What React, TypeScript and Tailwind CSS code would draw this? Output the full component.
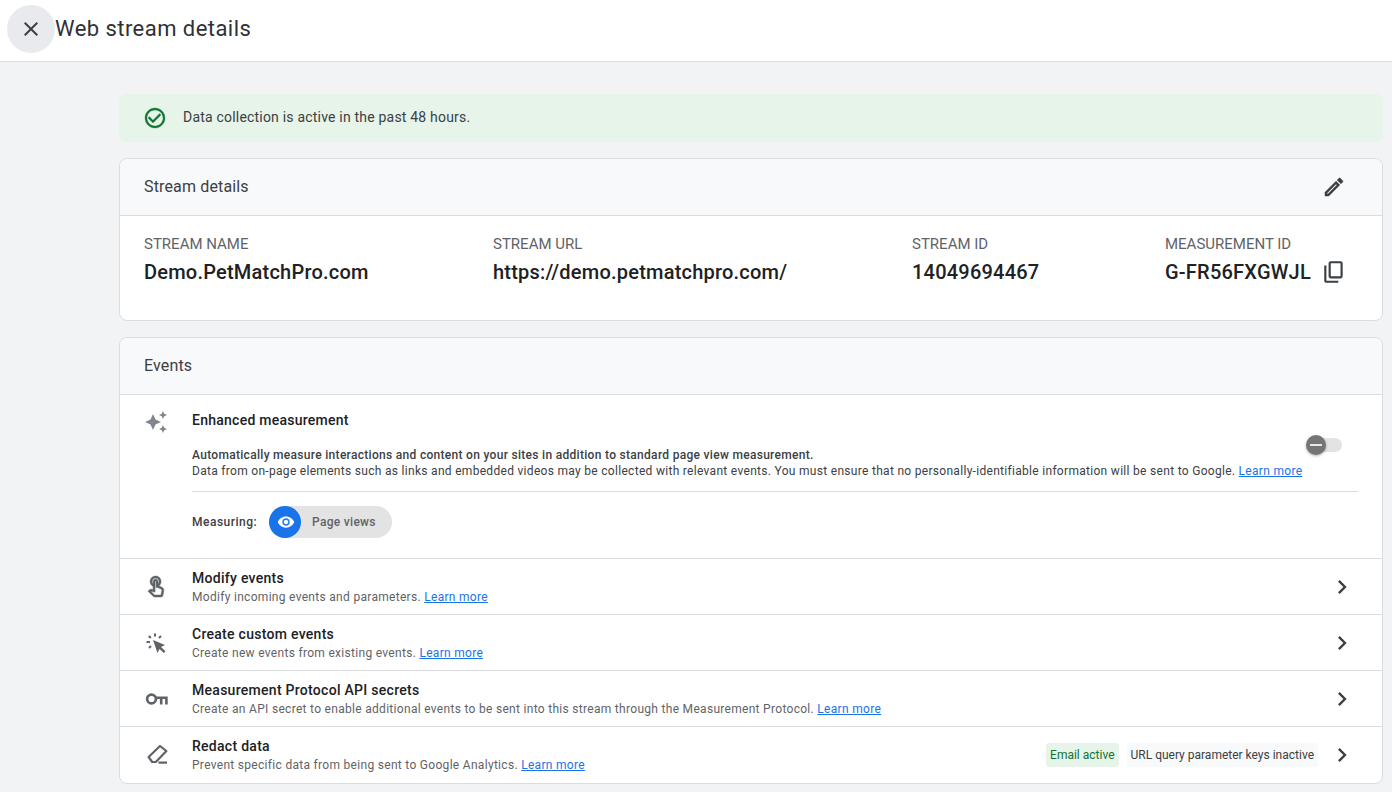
import React from "react";

const Icon = ({
  d,
  size = 24,
  className = "",
  bold = 0,
}: {
  d: string;
  size?: number;
  className?: string;
  bold?: number;
}) => (
  <svg
    width={size}
    height={size}
    viewBox="0 0 24 24"
    fill="currentColor"
    stroke={bold ? "currentColor" : "none"}
    strokeWidth={bold}
    className={`shrink-0 ${className}`}
  >
    <path d={d} />
  </svg>
);

const CHEVRON = "M8.59 16.59L13.17 12 8.59 7.41 10 6l6 6-6 6z";
const TOUCH =
  "M18.19 12.44l-3.24-1.62c1.29-1 2.12-2.56 2.12-4.32 0-3.03-2.47-5.5-5.5-5.5s-5.5 2.47-5.5 5.5c0 2.13 1.22 3.98 3 4.89v3.26c-2.15-.46-2.02-.44-2.26-.44-.53 0-1.03.21-1.41.59L4 16.22l5.09 5.09C9.52 21.75 10.12 22 10.74 22h6.3c.98 0 1.81-.7 1.97-1.67l.8-4.71c.22-1.3-.43-2.58-1.62-3.18zm-.35 2.85l-.8 4.71h-6.3c-.09 0-.17-.04-.24-.1l-3.68-3.68 4.25.89V6.5c0-.28.22-.5.5-.5s.5.22.5.5v6h1.76l3.46 1.73c.4.2.62.63.55 1.06zM8.07 6.5c0-1.93 1.57-3.5 3.5-3.5s3.5 1.57 3.5 3.5c0 .95-.38 1.81-1 2.44V6.5c0-1.38-1.12-2.5-2.5-2.5s-2.5 1.12-2.5 2.5v2.44c-.62-.63-1-1.49-1-2.44z";
const SPARK =
  "M19 9l1.25-2.75L23 5l-2.75-1.25L19 1l-1.25 2.75L15 5l2.75 1.25L19 9zm-7.5.5L9 4 6.5 9.5 1 12l5.5 2.5L9 20l2.5-5.5L17 12l-5.5-2.5zM19 15l-1.25 2.75L15 19l2.75 1.25L19 23l1.25-2.75L23 19l-2.75-1.25L19 15z";

const ClickIcon = () => (
  <svg width="24" height="24" viewBox="0 0 24 24" className="shrink-0 text-[#5f6368]" fill="none" stroke="currentColor" strokeWidth="2">
    <path d="M9 9l12 5-4 2 4.5 4.2-1.6 1.8-4.4-4-2 4z" fill="currentColor" stroke="none" />
    <path d="M11 2.5v3M2.5 11h3.5M4.8 5l2 2M17 5l-2 2M5 17l2-2" />
  </svg>
);

const KeyIcon = () => (
  <svg width="24" height="24" viewBox="0 0 24 24" className="shrink-0 text-[#5f6368]" fill="none" stroke="currentColor" strokeWidth="2.6">
    <circle cx="7.5" cy="12" r="4.4" />
    <path d="M11.5 10.8H22.4V17.5M17.2 10.8V17.5" />
  </svg>
);

const EraserIcon = () => (
  <svg width="24" height="24" viewBox="0 0 24 24" className="shrink-0 text-[#5f6368]" fill="none" stroke="currentColor" strokeWidth="2.2">
    <path d="M4.6 14 16 3l6.4 5L11.8 19H8.2z" strokeLinejoin="round" />
    <path d="M14.5 19.6h8.5" />
  </svg>
);

const Row = ({
  icon,
  title,
  desc,
  right,
}: {
  icon: React.ReactNode;
  title: string;
  desc: string;
  right?: React.ReactNode;
}) => (
  <div className="flex h-[56px] items-center border-t border-[#dadce0] pl-6 pr-[26px]">
    <div className="w-12 shrink-0">{icon}</div>
    <div className="flex-1 pb-px">
      <div className="mb-px text-[14px] leading-[20px] font-medium text-[#202124] tracking-[0.28px]">{title}</div>
      <div className="text-[12px] leading-[16px] text-[#5f6368] tracking-[0.3px]">
        {desc} <a className="text-[#1a73e8] underline">Learn more</a>
      </div>
    </div>
    {right}
    <Icon d={CHEVRON} size={28} className="text-[#3c4043]" />
  </div>
);

const Col = ({ label, value, after }: { label: string; value: string; after?: React.ReactNode }) => (
  <div>
    <div className="text-[15px] leading-[20px] text-[#5f6368]">{label}</div>
    <div className="mt-[4px] flex items-center gap-[10px] text-[20px] leading-[28px] font-medium tracking-[0.22px] text-[#202124]">
      {value}
      {after}
    </div>
  </div>
);

export default function App() {
  return (
    <div className="h-[792px] overflow-hidden bg-[#f1f3f4] font-['Roboto',sans-serif]">
      <header className="flex h-[62px] items-start border-b border-[#dadce0] bg-white pl-[7px] pt-[5px]">
        <div className="flex h-12 w-12 items-center justify-center rounded-full bg-[#e8eaed] text-[#3c4043]">
          <Icon d="M19 6.41L17.59 5 12 10.59 6.41 5 5 6.41 10.59 12 5 17.59 6.41 19 12 13.41 17.59 19 19 17.59 13.41 12z" />
        </div>
        <h1 className="text-[22px] leading-[48px] tracking-[0.45px] text-[#303134]">Web stream details</h1>
      </header>

      <main className="ml-[119px] mr-[9px] mt-8 flex flex-col gap-4">
        <div className="flex h-[48px] items-center rounded-lg bg-[#e6f4ea] pb-px pl-6 text-[14px] tracking-[0.2px] text-[#3c4043]">
          <Icon
            d="M16.59 7.58L10 14.17l-3.59-3.58L5 12l5 5 8-8zM12 2C6.48 2 2 6.48 2 12s4.48 10 10 10 10-4.48 10-10S17.52 2 12 2zm0 18c-4.42 0-8-3.58-8-8s3.58-8 8-8 8 3.58 8 8-3.58 8-8 8z"
            className="text-[#137333]"
            bold={0.3}
          />
          <span className="ml-4">Data collection is active in the past 48 hours.</span>
        </div>

        <section className="overflow-hidden rounded-lg border border-[#dadce0] bg-white">
          <div className="flex h-[56px] items-center justify-between bg-[#f8f9fa] pl-6 pr-9">
            <h2 className="text-[16px] tracking-[0.15px] text-[#3c4043]">Stream details</h2>
            <Icon
              d="M14.06 9.02l.92.92L5.92 19H5v-.92l9.06-9.06M17.66 3c-.25 0-.51.1-.7.29l-1.83 1.83 3.75 3.75 1.83-1.83c.39-.39.39-1.02 0-1.41l-2.34-2.34c-.2-.2-.45-.29-.71-.29zm-3.6 3.19L3 17.25V21h3.75L17.81 9.94l-3.75-3.75z"
              className="text-[#3c4043]"
              bold={0.5}
            />
          </div>
          <div className="grid h-[105px] grid-cols-[349px_419px_253px_auto] border-t border-[#dadce0] pl-6 pt-[18px]">
            <Col label="STREAM NAME" value="Demo.PetMatchPro.com" />
            <Col label="STREAM URL" value="https://demo.petmatchpro.com/" />
            <Col label="STREAM ID" value="14049694467" />
            <Col
              label="MEASUREMENT ID"
              value="G-FR56FXGWJL"
              after={
                <Icon
                  size={26}
                  d="M9 18q-.825 0-1.412-.587Q7 16.825 7 16V4q0-.825.588-1.413Q8.175 2 9 2h9q.825 0 1.413.587Q20 3.175 20 4v12q0 .825-.587 1.413Q18.825 18 18 18Zm0-2h9V4H9v12Zm-4 6q-.825 0-1.412-.587Q3 20.825 3 20V6h2v14h11v2Z"
                  className="text-[#3c4043]"
                />
              }
            />
          </div>
        </section>

        <section className="overflow-hidden rounded-lg border border-[#dadce0] bg-white pb-px">
          <div className="flex h-[56px] items-center bg-[#f8f9fa] pl-6">
            <h2 className="text-[16px] tracking-[0.15px] text-[#3c4043]">Events</h2>
          </div>
          <div className="flex h-[164px] border-t border-[#dadce0] pl-6 pr-6 pt-[15px]">
            <div className="w-12 shrink-0">
              <Icon d={SPARK} className="text-[#80868b]" />
            </div>
            <div className="flex-1">
              <div className="text-[14px] leading-[20px] font-medium text-[#202124] tracking-[0.25px]">Enhanced measurement</div>
              <div className="relative mt-[17px] border-b border-[#dadce0] pb-3 text-[12px] leading-[16px] text-[#3c4043] tracking-[0.3px]">
                <div className="font-medium">
                  Automatically measure interactions and content on your sites in addition to standard page view measurement.
                </div>
                <div>
                  Data from on-page elements such as links and embedded videos may be collected with relevant events. You must ensure that no personally-identifiable information will be sent to Google.{" "}
                  <a className="text-[#1a73e8] underline">Learn more</a>
                </div>
                <div className="absolute right-[16px] top-[-9px] h-[14px] w-[32px] rounded-full bg-[#e3e3e3]">
                  <div className="absolute left-[-4px] top-[-3px] flex h-5 w-5 items-center justify-center rounded-full bg-[#757575] shadow-[0_1px_3px_rgba(0,0,0,0.3)]">
                    <div className="h-[2px] w-3 bg-[#e8e8e8]" />
                  </div>
                </div>
              </div>
              <div className="mt-[14px] flex items-center text-[12px] font-medium text-[#3c4043]">
                <span className="w-[77px] tracking-[0.5px]">Measuring:</span>
                <div className="flex h-8 w-[123px] items-center rounded-full bg-[#e3e3e3]">
                  <div className="flex h-8 w-8 items-center justify-center rounded-full bg-[#1a73e8] pl-px text-white">
                    <Icon
                      size={18}
                      d="M12 4.5C7 4.5 2.73 7.61 1 12c1.73 4.39 6 7.5 11 7.5s9.27-3.11 11-7.5c-1.73-4.39-6-7.5-11-7.5zM12 17c-2.76 0-5-2.24-5-5s2.24-5 5-5 5 2.24 5 5-2.24 5-5 5zm0-8c-1.66 0-3 1.34-3 3s1.34 3 3 3 3-1.34 3-3-1.34-3-3-3z"
                    />
                  </div>
                  <span className="ml-[11px] tracking-[0.3px] text-[#5f6368]">Page views</span>
                </div>
              </div>
            </div>
          </div>
          <Row icon={<Icon d={TOUCH} bold={0.5} className="text-[#5f6368]" />} title="Modify events" desc="Modify incoming events and parameters." />
          <Row icon={<ClickIcon />} title="Create custom events" desc="Create new events from existing events." />
          <Row
            icon={<KeyIcon />}
            title="Measurement Protocol API secrets"
            desc="Create an API secret to enable additional events to be sent into this stream through the Measurement Protocol."
          />
          <Row
            icon={<EraserIcon />}
            title="Redact data"
            desc="Prevent specific data from being sent to Google Analytics."
            right={
              <div className="mr-[10px] flex items-center gap-2 text-[12px] leading-[24px]">
                <span className="rounded-[3px] bg-[#e6f4ea] px-1 text-[#137333]">Email active</span>
                <span className="rounded-[3px] bg-[#f8f9fa] px-1 text-[#3c4043]">URL query parameter keys inactive</span>
              </div>
            }
          />
        </section>
      </main>
    </div>
  );
}
